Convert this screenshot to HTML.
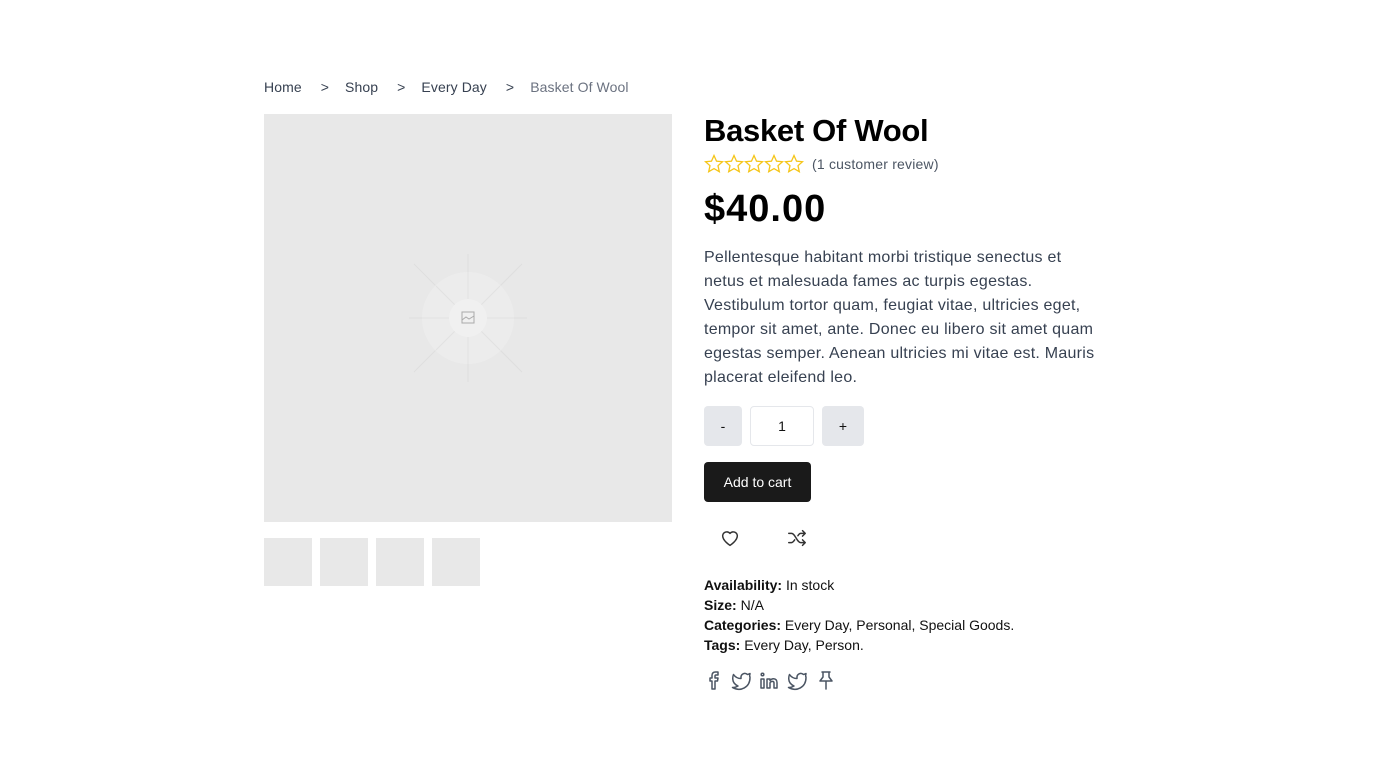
<!DOCTYPE html>
<html><head><meta charset="utf-8"><style>
*{margin:0;padding:0;box-sizing:border-box}
body{width:1376px;height:768px;background:#fff;font-family:"Liberation Sans",sans-serif;color:#111;position:relative;overflow:hidden}
.a{position:absolute}
.bc{top:79px;left:264px;font-size:14px;color:#374151;white-space:nowrap;letter-spacing:0.1px}
.img{left:264px;top:114px;width:408px;height:408px;background:#e8e8e8}
.th{top:538px;width:48px;height:48px;background:#e8e8e8}
.price{left:704px;top:188px;font-size:38px;font-weight:700;color:#000;letter-spacing:1px}
.desc{left:704px;top:246px;width:402px;font-size:16px;line-height:24px;color:#374151;letter-spacing:0.25px}
.btn{background:#e5e7eb;border-radius:4px;font-size:14px;display:flex;align-items:center;justify-content:center;color:#111}
.meta{left:704px;top:575px;font-size:14px;line-height:20px;color:#111}
</style></head><body>
<div class="a bc">Home<span style="margin:0 16px 0 19px">&gt;</span>Shop<span style="margin:0 16px 0 19px">&gt;</span>Every Day<span style="margin:0 16px 0 19px">&gt;</span><span style="color:#6b7280">Basket Of Wool</span></div>
<div class="a img">
<svg width="408" height="408" style="position:absolute;left:0;top:0">
<g stroke="#dedede" stroke-width="1" fill="none">
<line x1="204" y1="140" x2="204" y2="268"/><line x1="145" y1="204" x2="263" y2="204"/>
<line x1="150" y1="150" x2="258" y2="258"/><line x1="258" y1="150" x2="150" y2="258"/>
</g>
<circle cx="204" cy="204" r="46" fill="#ececec"/>
<g stroke="#e2e2e2" stroke-width="1"><line x1="204" y1="158" x2="204" y2="250"/><line x1="158" y1="204" x2="250" y2="204"/><line x1="172" y1="172" x2="236" y2="236"/><line x1="236" y1="172" x2="172" y2="236"/></g>
<circle cx="204" cy="204" r="19" fill="#f0f0f0"/>
<rect x="198" y="198" width="12" height="11" fill="none" stroke="#aaa" stroke-width="1"/>
<path d="M198 206l4-3 3 2 5-3" stroke="#aaa" fill="none"/>
</svg></div>
<div class="a th" style="left:264px"></div><div class="a th" style="left:320px"></div><div class="a th" style="left:376px"></div><div class="a th" style="left:432px"></div>
<div class="a" style="left:704px;top:113px;font-size:31px;font-weight:700;color:#000;letter-spacing:-0.3px">Basket Of Wool</div>
<div class="a" style="left:704px;top:154px;display:flex;align-items:center">
<svg width="100" height="20" viewBox="0 0 100 20">
<g fill="none" stroke="#f5c518" stroke-width="1.3">
<path id="s" d="M10 1.5l2.5 5.6 6 .6-4.5 4 1.3 6-5.3-3.1-5.3 3.1 1.3-6-4.5-4 6-.6z"/>
<use href="#s" x="20"/><use href="#s" x="40"/><use href="#s" x="60"/><use href="#s" x="80"/>
</g></svg>
<span style="font-size:14px;color:#4b5563;margin-left:8px;letter-spacing:0.2px">(1 customer review)</span></div>
<div class="a price">$40.00</div>
<div class="a desc">Pellentesque habitant morbi tristique senectus et netus et malesuada fames ac turpis egestas. Vestibulum tortor quam, feugiat vitae, ultricies eget, tempor sit amet, ante. Donec eu libero sit amet quam egestas semper. Aenean ultricies mi vitae est. Mauris placerat eleifend leo.</div>
<div class="a btn" style="left:704px;top:406px;width:38px;height:40px">-</div>
<div class="a" style="left:750px;top:406px;width:64px;height:40px;border:1px solid #e5e7eb;border-radius:4px;display:flex;align-items:center;justify-content:center;font-size:14px">1</div>
<div class="a btn" style="left:822px;top:406px;width:42px;height:40px">+</div>
<div class="a" style="left:704px;top:462px;width:107px;height:40px;background:#1a1a1a;color:#fff;border-radius:4px;font-size:14px;display:flex;align-items:center;justify-content:center">Add to cart</div>
<svg class="a" style="left:719px;top:527px" width="22" height="22" viewBox="0 0 24 24" fill="none" stroke="#333" stroke-width="1.6" stroke-linejoin="round"><path d="M12 20s-8-5-8-10.5A4.5 4.5 0 0 1 12 7a4.5 4.5 0 0 1 8 2.5C20 15 12 20 12 20z"/></svg>
<svg class="a" style="left:786px;top:527px" width="22" height="22" viewBox="0 0 24 24" fill="none" stroke="#333" stroke-width="1.6" stroke-linecap="round" stroke-linejoin="round"><path d="M3 7h3c4 0 6 10 10 10h4M3 17h3c1.5 0 2.5-1.5 3.5-3M13 9.5c1-1.5 2-2.5 3-2.5h4M18 4l3 3-3 3M18 14l3 3-3 3"/></svg>
<div class="a meta"><b>Availability:</b> In stock<br><b>Size:</b> N/A<br><b>Categories:</b> Every Day, Personal, Special Goods.<br><b>Tags:</b> Every Day, Person.</div>
<svg class="a" style="left:704px;top:669px" width="136" height="22" viewBox="0 0 136 22" fill="none" stroke="#4b5563" stroke-width="1.5" stroke-linejoin="round" stroke-linecap="round">
<path d="M8 20v-8H6v-3h2V6.5C8 4.5 9 3 11.5 3H14v3h-2c-.8 0-1 .3-1 1V9h3l-.5 3H11v8z"/>
<path d="M46 4.5c-.8.5-1.7.8-2.6 1A3.8 3.8 0 0 0 37 8.5v1a9 9 0 0 1-7.5-4s-3.5 8 4.5 11.5a9.5 9.5 0 0 1-5.5 1.5c8 4.5 17.5 0 17.5-10a4 4 0 0 0-.1-.8C45.2 7 46 5.5 46 4.5z"/>
<rect x="57" y="10" width="3" height="9"/>
<circle cx="58.5" cy="5.5" r="1.3"/>
<path d="M63 19v-9h3v1.5c.8-1 2-1.8 3.5-1.8 2.2 0 3.5 1.5 3.5 4V19h-3v-5c0-1-.6-1.6-1.5-1.6S66 13 66 14v5z"/>
<path d="M102 4.5c-.8.5-1.7.8-2.6 1A3.8 3.8 0 0 0 93 8.5v1a9 9 0 0 1-7.5-4s-3.5 8 4.5 11.5a9.5 9.5 0 0 1-5.5 1.5c8 4.5 17.5 0 17.5-10a4 4 0 0 0-.1-.8C101.2 7 102 5.5 102 4.5z"/>
<path d="M118 3h8M119 3v5l-3 4h12l-3-4V3M122 12v8"/>
</svg>
</body></html>
